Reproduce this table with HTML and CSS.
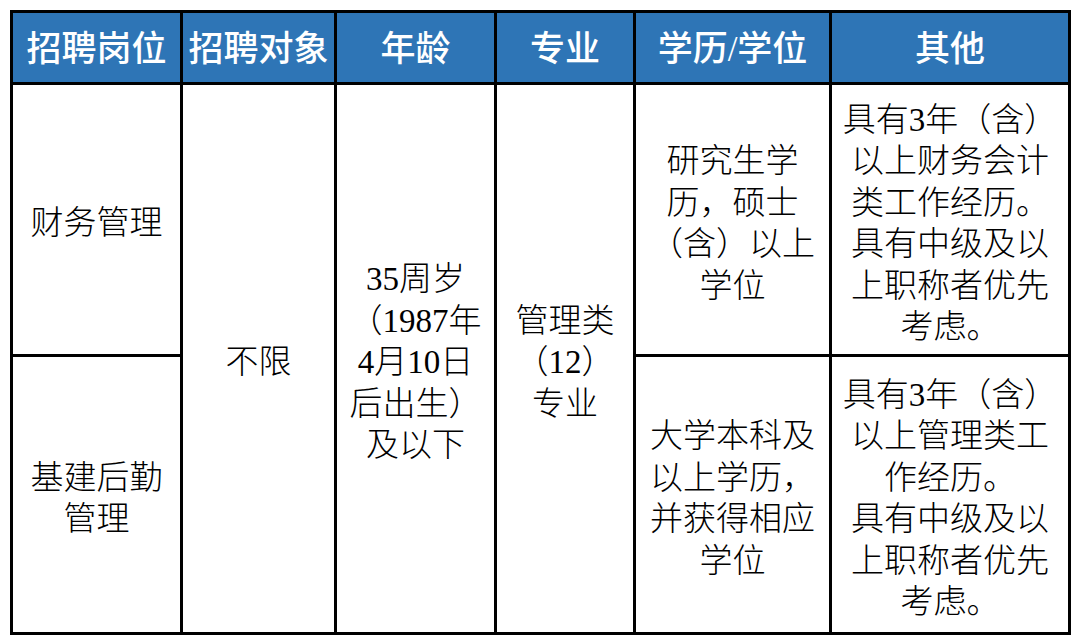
FILE: index.html
```html
<!DOCTYPE html>
<html lang="zh-CN">
<head>
<meta charset="utf-8">
<title>招聘岗位</title>
<link rel="stylesheet" href="styles.css">
</head>
<body>
<div class="table">
  <div class="cell head">招聘岗位</div>
  <div class="cell head">招聘对象</div>
  <div class="cell head">年龄</div>
  <div class="cell head">专业</div>
  <div class="cell head">学历/学位</div>
  <div class="cell head">其他</div>

  <div class="cell">财务管理</div>
  <div class="cell span2">不限</div>
  <div class="cell span2">35周岁<br>（1987年<br>4月10日<br>后出生）<br>及以下</div>
  <div class="cell span2">管理类<br>（12）<br>专业</div>
  <div class="cell">研究生学<br>历，硕士<br>（含）以上<br>学位</div>
  <div class="cell">具有3年（含）<br>以上财务会计<br>类工作经历。<br>具有中级及以<br>上职称者优先<br>考虑。</div>

  <div class="cell">基建后勤<br>管理</div>
  <div class="cell">大学本科及<br>以上学历，<br>并获得相应<br>学位</div>
  <div class="cell">具有3年（含）<br>以上管理类工<br>作经历。<br>具有中级及以<br>上职称者优先<br>考虑。</div>
</div>
</body>
</html>
```

FILE: styles.css
```css
html, body {
  margin: 0;
  padding: 0;
  background: #ffffff;
}

body {
  padding: 10px;
  font-family: "Liberation Serif", "Noto Sans CJK SC", serif;
  color: #000;
}

.table {
  display: grid;
  grid-template-columns: 167px 151px 157px 136px 193px 236px;
  grid-template-rows: 69px 269px 275px;
  gap: 3px;
  padding: 3px;
  background: #000;
  width: max-content;
}

.cell {
  background: #fff;
  display: flex;
  align-items: center;
  justify-content: center;
  text-align: center;
  font-size: 33px;
  line-height: 41.5px;
  font-weight: 300;
  padding-top: 9px;
  box-sizing: border-box;
}

.head {
  background: #2e75b6;
  color: #fff;
  font-size: 35px;
  font-weight: 500;
  line-height: 40px;
  padding-top: 5px;
}

.span2 {
  grid-row: span 2;
}
```
